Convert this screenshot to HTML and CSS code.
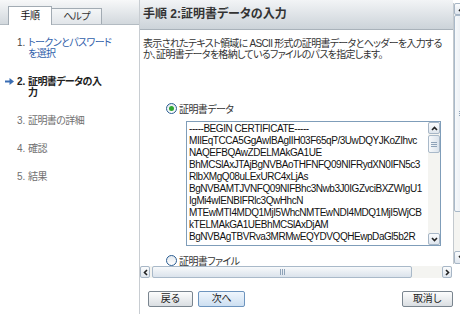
FILE: index.html
```html
<!DOCTYPE html>
<html>
<head>
    <title>証明書データの入力</title>
    <link rel="stylesheet" href="styles.css">
</head>
<body>
<div class="wizard">
    <div class="side">
        <div class="tabs">
            <div class="tab active">手順</div>
            <div class="tab">ヘルプ</div>
        </div>
        <ol class="steps">
            <li class="step done"><span class="mark"></span><span class="num">1.</span><a href="#">トークンとパスワード<br>を選択</a></li>
            <li class="step current">
                <span class="mark">
                    <svg width="9" height="7" viewBox="0 0 9 7"><path d="M0 3.5h5.5" stroke="#3a6db3" stroke-width="2"/><path d="M4.5 0L9 3.5 4.5 7z" fill="#3a6db3"/></svg>
                </span>
                <span class="num">2.</span><span>証明書データの入<br>力</span>
            </li>
            <li class="step"><span class="mark"></span><span class="num">3.</span><span>証明書の詳細</span></li>
            <li class="step"><span class="mark"></span><span class="num">4.</span><span>確認</span></li>
            <li class="step"><span class="mark"></span><span class="num">5.</span><span>結果</span></li>
        </ol>
    </div>

    <div class="main">
        <div class="pane">
            <h1 class="title">手順 2:証明書データの入力</h1>
            <p class="desc">表示されたテキスト領域に ASCII 形式の証明書データとヘッダーを入力する<br>か、証明書データを格納しているファイルのパスを指定します。</p>

            <label class="choice"><span class="radio on"></span>証明書データ</label>
            <div class="certbox">
<pre class="certtext">-----BEGIN CERTIFICATE-----
MIIEqTCCA5GgAwIBAgIIH03F65qP/3UwDQYJKoZIhvc
NAQEFBQAwZDELMAkGA1UE
BhMCSlAxJTAjBgNVBAoTHFNFQ09NIFRydXN0IFN5c3
RlbXMgQ08uLExURC4xLjAs
BgNVBAMTJVNFQ09NIFBhc3Nwb3J0IGZvciBXZWIgU1
IgMi4wIENBIFRlc3QwHhcN
MTEwMTI4MDQ1MjI5WhcNMTEwNDI4MDQ1MjI5WjCB
kTELMAkGA1UEBhMCSlAxDjAM
BgNVBAgTBVRva3MRMwEQYDVQQHEwpDaGl5b2R</pre>
                <div class="vbar inner">
                    <div class="sbtn"><svg width="7" height="5"><polyline points="1,4 3.5,1.5 6,4" fill="none" stroke="#222" stroke-width="1.6"/></svg></div>
                    <div class="thumb"><svg width="6" height="5"><path d="M0 .5h6M0 2.5h6M0 4.5h6" stroke="#8fa3b8"/></svg></div>
                    <div class="track"></div>
                    <div class="sbtn"><svg width="7" height="5"><polyline points="1,1 3.5,3.5 6,1" fill="none" stroke="#222" stroke-width="1.6"/></svg></div>
                </div>
            </div>

            <label class="choice file"><span class="radio"></span>証明書ファイル</label>
        </div>

        <div class="vbar outer">
            <div class="sbtn"><svg width="7" height="5"><polyline points="1,4 3.5,1.5 6,4" fill="none" stroke="#222" stroke-width="1.6"/></svg></div>
            <div class="thumb"><svg width="6" height="5"><path d="M0 .5h6M0 2.5h6M0 4.5h6" stroke="#8fa3b8"/></svg></div>
            <div class="track"></div>
            <div class="sbtn"><svg width="7" height="5"><polyline points="1,1 3.5,3.5 6,1" fill="none" stroke="#222" stroke-width="1.6"/></svg></div>
        </div>

        <div class="hbar">
            <div class="sbtn"><svg width="5" height="7"><polyline points="4,1 1.5,3.5 4,6" fill="none" stroke="#222" stroke-width="1.6"/></svg></div>
            <div class="thumb"><svg width="5" height="6"><path d="M.5 0v6M2.5 0v6M4.5 0v6" stroke="#8fa3b8"/></svg></div>
            <div class="track"></div>
            <div class="sbtn"><svg width="5" height="7"><polyline points="1,1 3.5,3.5 1,6" fill="none" stroke="#222" stroke-width="1.6"/></svg></div>
        </div>

        <div class="actions">
            <button class="btn back">戻る</button>
            <button class="btn next">次へ</button>
            <button class="btn cancel">取消し</button>
        </div>
    </div>
</div>
</body>
</html>
```

FILE: styles.css
```css
* { box-sizing: border-box; }
body { margin: 0; width: 460px; height: 314px; overflow: hidden; background: #fff; color: #333; font-family: "Liberation Sans", "Noto Sans CJK JP", sans-serif; font-size: 10px; letter-spacing: -0.6px; font-feature-settings: "palt"; }

.wizard { display: flex; height: 314px; }

/* left column: tabs + steps */
.side { width: 140px; flex: none; border-right: 1px solid #c8cdd2; }
.tabs { height: 25px; display: flex; align-items: flex-end; padding-left: 8px; background: linear-gradient(#f7f8f9, #d2d8dd); border-bottom: 1px solid #b3bbc2; }
.tab { width: 50px; height: 16px; line-height: 15px; text-align: center; color: #333; background: linear-gradient(#f4f6f7, #e1e5e9); border: 1px solid #a2abb3; border-left: none; border-bottom: none; }
.tab.active { width: 44px; height: 19px; line-height: 18px; margin-bottom: -1px; background: #fff; border-left: 1px solid #a2abb3; color: #111; }

.steps { list-style: none; margin: 0; padding: 12px 0 0; }
.step { display: flex; line-height: 11px; margin-bottom: 17px; white-space: nowrap; color: #707070; }
.step.done { color: #444; }
.step a { color: #2f60aa; text-decoration: none; }
.step.current { font-weight: bold; color: #222; }
.mark { width: 17px; flex: none; padding: 2px 0 0 5px; }
.mark svg { display: block; }
.num { width: 11px; flex: none; letter-spacing: 0; }

/* right column */
.main { flex: 1; display: grid; grid-template-columns: 313px 16px; grid-template-rows: 266px 12px 36px; overflow: hidden; }
.pane { overflow: hidden; }
.title { margin: 0; height: 30px; line-height: 29px; padding-left: 3px; font-size: 12px; letter-spacing: 0; font-weight: bold; color: #333; background: linear-gradient(#f2f4f6, #ccd3d9); border-bottom: 1px solid #a9b2ba; }
.desc { margin: 0; padding: 8px 0 0 3px; line-height: 11px; white-space: nowrap; letter-spacing: -0.7px; color: #333; }

.choice { display: flex; align-items: center; gap: 2px; height: 12px; margin: 42px 0 0 26px; color: #333; }
.choice.file { margin-top: 8px; }
.radio { width: 11px; height: 11px; border-radius: 50%; border: 1px solid #2a5d92; background: linear-gradient(#e4e9ee, #fff); display: flex; align-items: center; justify-content: center; }
.radio.on::after { content: ""; width: 5px; height: 5px; border-radius: 50%; background: #2fa62f; }

.certbox { display: flex; width: 255px; height: 125px; margin: 7px 0 0 46px; border: 1px solid #7f9db9; }
.certtext { flex: 1; margin: 0; padding: 1px 0 0 2px; overflow: hidden; white-space: pre; font-family: "Liberation Sans", sans-serif; font-size: 10px; line-height: 12px; letter-spacing: -0.45px; color: #111; }

/* scrollbars */
.vbar { display: flex; flex-direction: column; background: #f4f4f1; }
.vbar.inner { width: 12px; }
.vbar.outer { margin: 3px 0 2px; border-left: 1px solid #c3c9ce; }
.sbtn { flex: none; display: flex; align-items: center; justify-content: center; border: 1px solid #a7b6c6; border-radius: 2px; background: linear-gradient(#fbfcfd, #dfe6ee); }
.vbar .sbtn { height: 12px; }
.vbar.outer .sbtn:last-child { height: 13px; }
.thumb { flex: none; display: flex; align-items: center; justify-content: center; border: 1px solid #a9b9c9; border-radius: 2px; background: linear-gradient(90deg, #f7f9fb, #dbe3ec); }
.vbar.inner .thumb { height: 18px; margin-top: 1px; }
.vbar.outer .thumb { height: 197px; }
.track { flex: 1; }

.hbar { grid-column: 1; grid-row: 2; display: flex; height: 12px; margin-right: 1px; background: #f4f4f1; }
.hbar .sbtn { width: 10px; }
.hbar .thumb { width: 260px; margin-left: 2px; background: linear-gradient(#f7f9fb, #dbe3ec); }

/* buttons */
.actions { grid-column: 1; grid-row: 3; display: flex; gap: 5px; padding: 13px 0 0 8px; }
.btn { height: 16px; padding: 0; font-family: "Liberation Sans", "Noto Sans CJK JP", sans-serif; font-size: 10px; letter-spacing: -0.3px; line-height: 14px; color: #222; background: linear-gradient(#fdfdfd, #dadee2); border: 1px solid #7a858f; border-radius: 2px; }
.btn.back { width: 45px; }
.btn.next { width: 47px; background: linear-gradient(#eff6fd, #cddff1); border-color: #6d94be; }
.btn.cancel { width: 51px; margin-left: auto; }
```
